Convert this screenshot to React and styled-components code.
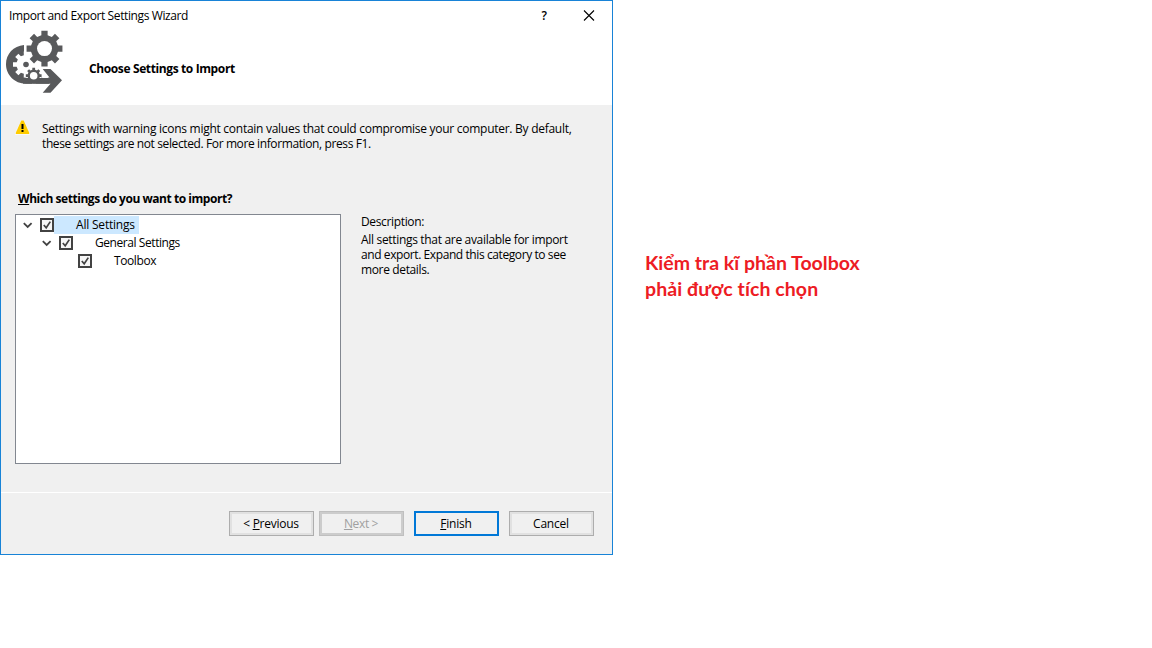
import React from 'react';
import styled, { createGlobalStyle } from 'styled-components';

const GlobalStyle = createGlobalStyle`
  * { box-sizing: border-box; }
  body { margin: 0; background: #fff; overflow: hidden; }
`;

const Page = styled.main`
  display: flex;
  align-items: flex-start;
  width: 1152px;
  height: 648px;
  font: 12px/15px "Open Sans", "Noto Sans", sans-serif;
  font-variant-ligatures: none;
  color: #000;
`;

const Dialog = styled.section`
  display: flex;
  flex-direction: column;
  width: 613px;
  height: 555px;
  border: 1px solid #1883d7;
  background: #f0f0f0;
`;

const Text = styled.span`
  display: block;
  white-space: nowrap;
  font-weight: ${(p) => (p.$bold ? 700 : 400)};
  letter-spacing: ${(p) => p.$track || 0}px;
`;

const Key = styled.span`
  text-decoration: underline;
  text-decoration-thickness: 1px;
  text-underline-offset: 1px;
`;

const Header = styled.header`
  height: 104px;
  background: #fff;
`;

const TitleBar = styled.div`
  display: flex;
  align-items: center;
  height: 29px;
  padding: 0 17px 0 8px;
`;

const TitleButtons = styled.div`
  display: flex;
  align-items: center;
  gap: 36px;
  margin-left: auto;
`;

const HelpMark = styled.span`
  font-weight: 600;
`;

const Heading = styled.div`
  display: flex;
  align-items: flex-start;
  gap: 26px;
  padding-left: 5px;
`;

const HeadingText = styled.div`
  padding-top: 31px;
`;

const Body = styled.div`
  flex: 1;
  padding: 15px 14px 0;
`;

const Warning = styled.div`
  display: flex;
  gap: 12px;
  height: 71px;
`;

const WarningText = styled.div`
  padding-top: 1px;
`;

const Question = styled.div`
  padding-left: 3px;
  height: 23px;
`;

const Columns = styled.div`
  display: flex;
  gap: 20px;
`;

const Tree = styled.div`
  width: 326px;
  height: 250px;
  padding-top: 1px;
  border: 1px solid #828790;
  background: #fff;
`;

const TreeRow = styled.div`
  display: flex;
  align-items: center;
  height: 18px;
  padding-left: ${(p) => 5 + p.$level * 19}px;
`;

const Expander = styled.span`
  display: flex;
  width: 19px;
`;

const CheckIcon = styled.svg`
  display: block;
  flex: none;
`;

const TreeLabel = styled.div`
  display: flex;
  align-items: center;
  height: 18px;
  padding: 0 4px 1px 22px;
  background: ${(p) => (p.$selected ? '#cce8ff' : 'transparent')};
  width: ${(p) => p.$width}px;
`;

const Description = styled.div`
  flex: 1;
`;

const DescriptionBody = styled.div`
  padding-top: 3px;
`;

const Footer = styled.footer`
  display: flex;
  align-items: flex-start;
  justify-content: flex-end;
  height: 62px;
  padding: 18px 18px 0 0;
  border-top: 1px solid #fff;
`;

const Button = styled.button`
  display: flex;
  align-items: center;
  justify-content: center;
  width: 85px;
  height: 25px;
  margin: 0 0 0 ${(p) => p.$gap || 0}px;
  padding: 0 1px 1px 0;
  font: inherit;
  color: ${(p) => (p.disabled ? '#a0a0a0' : '#000')};
  background: #f0f0f0;
  border: ${(p) => (p.$primary ? '2px solid #0078d7' : p.disabled ? '1px solid #bfbfbf' : '1px solid #adadad')};
  box-shadow: ${(p) => (p.$primary ? 'none' : `inset 0 0 0 2px ${p.disabled ? '#cccccc' : '#e1e1e1'}`)};
`;

const Note = styled.aside`
  padding: 250px 0 0 32px;
  font: 700 19.5px/26px Lato, "Open Sans", sans-serif;
  font-variant-ligatures: none;
  color: #ed1c24;
`;

function gearPath(cx, cy, outer, inner, teeth, offset = 0) {
  const step = (Math.PI * 2) / teeth;
  const points = [];
  for (let i = 0; i < teeth; i += 1) {
    const a = i * step + offset - Math.PI / 2;
    [[-0.29, inner], [-0.22, outer], [0.22, outer], [0.29, inner]].forEach(([f, r]) => {
      points.push(`${(cx + r * Math.cos(a + f * step)).toFixed(2)} ${(cy + r * Math.sin(a + f * step)).toFixed(2)}`);
    });
  }
  return `M${points.join('L')}Z`;
}

const WizardIcon = () => (
  <svg width="57" height="64" viewBox="6 30 57 64">
    <path d="M24 45C13.5 45.8 6 54 6 64.3C6 75 14.5 83.7 26 83.7H50.5L42.7 92.8H50.5L62 80.3L50.5 69H42.7L49.5 77.5H30L24 70Z" fill="#58595b" />
    <path d={gearPath(26, 64.5, 13.2, 9.6, 8)} fill="#fff" />
    <circle cx="26" cy="64.5" r="2.8" fill="#58595b" />
    <path d={gearPath(33.7, 75.7, 9, 7.6, 8)} fill="#fff" />
    <path d="M23 78H49V83.7H23Z" fill="#58595b" />
    <path d={gearPath(33.7, 75.7, 8, 6.2, 8)} fill="#58595b" />
    <circle cx="33.7" cy="75.7" r="3.8" fill="#fff" />
    <path d="M42.2 71V78H48.5Z" fill="#fff" />
    <path d="M24 45H27V53L31 62L44 68L38 68Z" fill="#fff" />
    <path d={gearPath(44.5, 48.6, 18.2, 13.8, 8)} fill="#58595b" />
    <circle cx="44.5" cy="48.6" r="7.5" fill="#fff" />
  </svg>
);

const CloseIcon = () => (
  <svg width="12" height="12" viewBox="0 0 12 12">
    <path d="M1 0.5L11 10.5M11 0.5L1 10.5" stroke="#000" strokeWidth="1.1" />
  </svg>
);

const WarningIcon = () => (
  <svg width="15" height="15" viewBox="0 0 15 15">
    <path d="M6.5 0H8.5L15 13V15H0V13Z" fill="#fff" opacity="0.6" />
    <path d="M6.3 0.5H8.7L14.2 12.8V14H0.8V12.8Z" fill="#fc0" />
    <path d="M6.5 4H8.5V9H6.5ZM6.5 10H8.5V12H6.5Z" fill="#000" />
  </svg>
);

const Chevron = () => (
  <svg width="13" height="10" viewBox="0 0 13 10">
    <path d="M2.8 3.2L6.7 7L10.6 3.2" fill="none" stroke="#424242" strokeWidth="1.8" />
  </svg>
);

const CheckBox = () => (
  <CheckIcon width="14" height="14" viewBox="0 0 14 14">
    <rect x="1" y="1" width="12" height="12" fill="#f6f6f6" stroke="#424242" strokeWidth="2" />
    <path d="M3.8 7L6.2 9.8L10.3 3.6" fill="none" stroke="#424242" strokeWidth="1.7" />
  </CheckIcon>
);

const tree = [
  { label: 'All Settings', level: 0, open: true, selected: true, width: 85, track: -0.2 },
  { label: 'General Settings', level: 1, open: true, width: 120, track: -0.43 },
  { label: 'Toolbox', level: 2, width: 85, track: -0.4 },
];

export default function App() {
  return (
    <Page>
      <GlobalStyle />
      <Dialog>
        <Header>
          <TitleBar>
            <Text $track={-0.39}>Import and Export Settings Wizard</Text>
            <TitleButtons>
              <HelpMark>?</HelpMark>
              <CloseIcon />
            </TitleButtons>
          </TitleBar>
          <Heading>
            <WizardIcon />
            <HeadingText>
              <Text $bold $track={-0.38}>Choose Settings to Import</Text>
            </HeadingText>
          </Heading>
        </Header>
        <Body>
          <Warning>
            <WarningIcon />
            <WarningText>
              <Text $track={-0.27}>Settings with warning icons might contain values that could compromise your computer. By default,</Text>
              <Text $track={-0.385}>these settings are not selected. For more information, press F1.</Text>
            </WarningText>
          </Warning>
          <Question>
            <Text $bold $track={-0.46}><Key>W</Key>hich settings do you want to import?</Text>
          </Question>
          <Columns>
            <Tree>
              {tree.map((row) => (
                <TreeRow key={row.label} $level={row.level}>
                  <Expander>{row.open && <Chevron />}</Expander>
                  <CheckBox />
                  <TreeLabel $selected={row.selected} $width={row.width}>
                    <Text $track={row.track}>{row.label}</Text>
                  </TreeLabel>
                </TreeRow>
              ))}
            </Tree>
            <Description>
              <Text $track={-0.35}>Description:</Text>
              <DescriptionBody>
                <Text $track={-0.32}>All settings that are available for import</Text>
                <Text $track={-0.41}>and export. Expand this category to see</Text>
                <Text $track={-0.36}>more details.</Text>
              </DescriptionBody>
            </Description>
          </Columns>
        </Body>
        <Footer>
          <Button><Text $track={-0.25}>&lt; <Key>P</Key>revious</Text></Button>
          <Button disabled $gap={5}><Text $track={-0.35}><Key>N</Key>ext &gt;</Text></Button>
          <Button $primary $gap={10}><Text $track={-0.2}><Key>F</Key>inish</Text></Button>
          <Button $gap={10}><Text $track={-0.2}>Cancel</Text></Button>
        </Footer>
      </Dialog>
      <Note>
        <Text as="div" $bold>Kiểm tra kĩ phần Toolbox</Text>
        <Text as="div" $bold $track={0.08}>phải được tích chọn</Text>
      </Note>
    </Page>
  );
}
